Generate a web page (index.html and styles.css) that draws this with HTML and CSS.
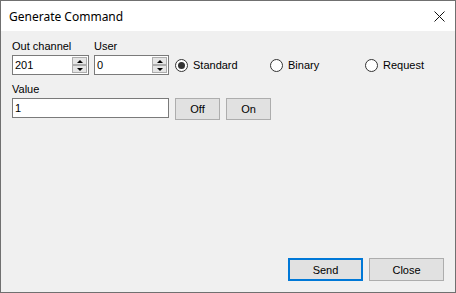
FILE: index.html
```html
<!DOCTYPE html>
<html lang="en">
<head>
    <meta charset="UTF-8">
    <title>Generate Command</title>
    <link rel="stylesheet" href="styles.css">
</head>
<body>
    <div class="window">
        <!-- title bar -->
        <div class="titlebar">
            <span class="title">Generate Command</span>
            <svg class="close-x" width="11" height="11" viewBox="0 0 11 11">
                <path d="M0.5 0.5 L10.5 10.5 M10.5 0.5 L0.5 10.5" stroke="#111" stroke-width="1" fill="none"/>
            </svg>
        </div>

        <div class="content">
            <!-- channel / user / mode -->
            <div class="row">
                <div class="field out">
                    <label>Out channel</label>
                    <div class="spin">
                        <span class="val">201</span>
                        <div class="spin-btns">
                            <div class="spin-up"><i></i></div>
                            <div class="spin-down"><i></i></div>
                        </div>
                    </div>
                </div>
                <div class="field user">
                    <label>User</label>
                    <div class="spin">
                        <span class="val">0</span>
                        <div class="spin-btns">
                            <div class="spin-up"><i></i></div>
                            <div class="spin-down"><i></i></div>
                        </div>
                    </div>
                </div>
                <div class="radios">
                    <div class="radio"><span class="dot checked"></span>Standard</div>
                    <div class="radio"><span class="dot"></span>Binary</div>
                    <div class="radio"><span class="dot"></span>Request</div>
                </div>
            </div>

            <!-- value -->
            <div class="row row-value">
                <div class="field value">
                    <label>Value</label>
                    <div class="textbox"><span class="val">1</span></div>
                </div>
                <button class="btn small">Off</button>
                <button class="btn small">On</button>
            </div>

            <!-- dialog buttons -->
            <div class="footer">
                <button class="btn default">Send</button>
                <button class="btn">Close</button>
            </div>
        </div>
    </div>
</body>
</html>
```

FILE: styles.css
```css
body {
    margin: 0;
    font-family: 'Liberation Sans', Arial, sans-serif;
    font-size: 11px;
    color: #000;
    background-color: #f0f0f0;
}
.window {
    width: 456px;
    height: 293px;
    box-sizing: border-box;
    border: 1px solid #707070;
    display: flex;
    flex-direction: column;
    background-color: #f0f0f0;
}
.titlebar {
    height: 30px;
    background-color: #ffffff;
    display: flex;
    align-items: center;
    justify-content: space-between;
    padding: 0 10px 0 8px;
}
.title {
    font-family: 'Noto Sans', 'Open Sans', sans-serif;
    font-size: 12px;
    color: #000;
}
.close-x {
    display: block;
    margin-top: 1px;
}
.content {
    flex: 1;
    display: flex;
    flex-direction: column;
    padding: 9px 11px 11px 11px;
}
.row {
    display: flex;
    align-items: flex-end;
}
.row-value {
    margin-top: 8px;
}
.field {
    flex-shrink: 0;
}
.field label {
    display: block;
    line-height: 13px;
    margin-bottom: 2px;
}
.field.out {
    width: 77px;
    margin-right: 5px;
}
.field.user {
    width: 75px;
}
.field.value {
    width: 157px;
    margin-bottom: 2px;
}
.spin, .textbox {
    height: 20px;
    box-sizing: border-box;
    border: 1px solid #7a7a7a;
    background-color: #ffffff;
    display: flex;
}
.val {
    flex: 1;
    padding-left: 2px;
    line-height: 18px;
}
.spin-btns {
    width: 15px;
    margin: 1px 1px 1px 0;
    display: flex;
    flex-direction: column;
}
.spin-up, .spin-down {
    flex: 1;
    box-sizing: border-box;
    border: 1px solid #adadad;
    background-color: #e5e5e5;
    display: flex;
    align-items: center;
    justify-content: center;
}
.spin-up i, .spin-down i {
    width: 0;
    height: 0;
    border-left: 3px solid transparent;
    border-right: 3px solid transparent;
}
.spin-up i {
    border-bottom: 3px solid #000;
}
.spin-down i {
    border-top: 3px solid #000;
}
.radios {
    display: flex;
    align-items: center;
    height: 20px;
    margin-left: 6px;
}
.radio {
    width: 95px;
    flex-shrink: 0;
    display: flex;
    align-items: center;
    gap: 5px;
    line-height: 13px;
}
.radio:last-child {
    width: auto;
}
.dot {
    width: 13px;
    height: 13px;
    box-sizing: border-box;
    border: 1px solid #333;
    border-radius: 50%;
    background-color: #ffffff;
    display: flex;
    align-items: center;
    justify-content: center;
}
.dot.checked::after {
    content: "";
    width: 7px;
    height: 7px;
    border-radius: 50%;
    background-color: #333;
}
.btn {
    font-family: 'Liberation Sans', Arial, sans-serif;
    font-size: 11px;
    color: #000;
    background-color: #e1e1e1;
    border: 1px solid #adadad;
    width: 75px;
    height: 23px;
    padding: 0;
    box-sizing: border-box;
}
.btn.small {
    width: 45px;
    height: 22px;
    margin-left: 6px;
}
.btn.default {
    border: 2px solid #0078d7;
}
.footer {
    margin-top: auto;
    display: flex;
    justify-content: flex-end;
    gap: 6px;
}
```
